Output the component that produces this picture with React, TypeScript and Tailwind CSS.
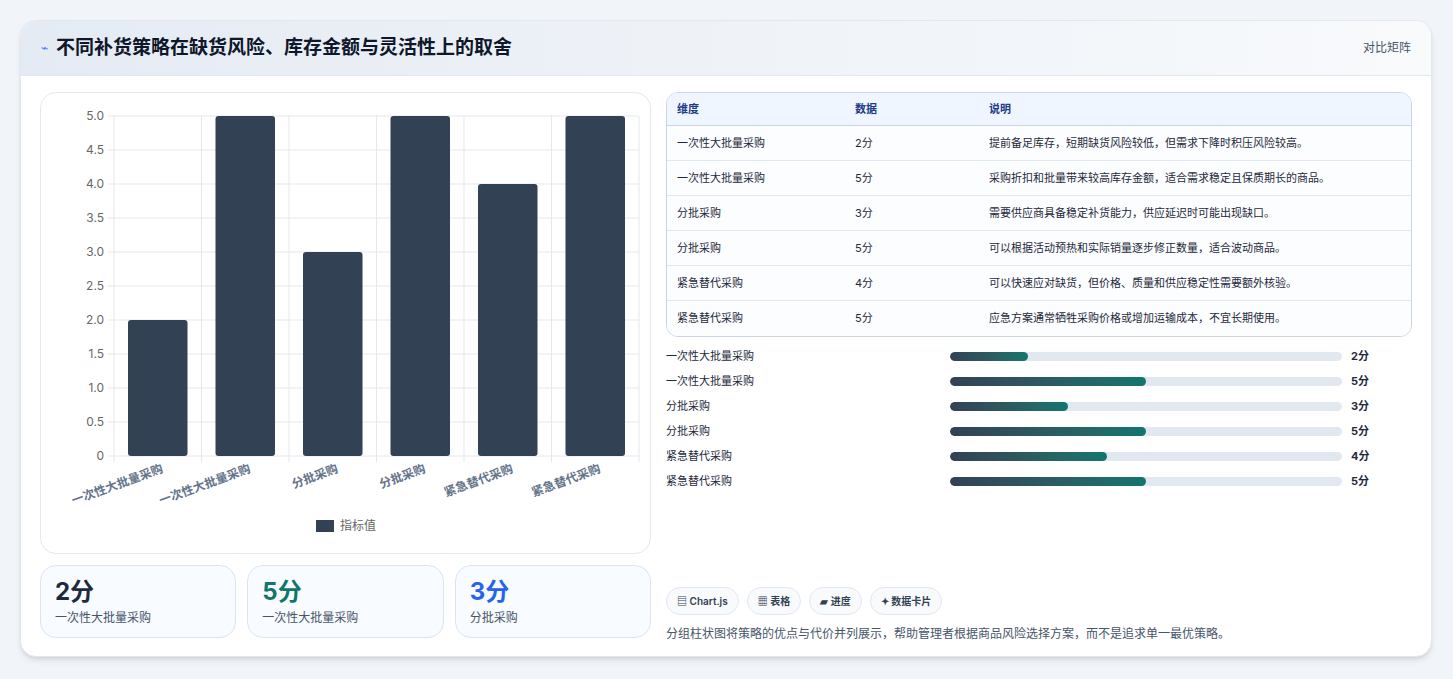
import React from "react";

const cats = ["一次性大批量采购", "一次性大批量采购", "分批采购", "分批采购", "紧急替代采购", "紧急替代采购"];
const vals = [2, 5, 3, 5, 4, 5];
const rows = [
  ["一次性大批量采购", "2分", "提前备足库存，短期缺货风险较低，但需求下降时积压风险较高。"],
  ["一次性大批量采购", "5分", "采购折扣和批量带来较高库存金额，适合需求稳定且保质期长的商品。"],
  ["分批采购", "3分", "需要供应商具备稳定补货能力，供应延迟时可能出现缺口。"],
  ["分批采购", "5分", "可以根据活动预热和实际销量逐步修正数量，适合波动商品。"],
  ["紧急替代采购", "4分", "可以快速应对缺货，但价格、质量和供应稳定性需要额外核验。"],
  ["紧急替代采购", "5分", "应急方案通常牺牲采购价格或增加运输成本，不宜长期使用。"],
];

function Chart() {
  const x0 = 73, x1 = 598, y0 = 23, y1 = 363;
  const cw = (x1 - x0) / 6;
  const yAt = (v: number) => y1 - (v / 5) * (y1 - y0);
  const ticks = [0, 0.5, 1, 1.5, 2, 2.5, 3, 3.5, 4, 4.5, 5];
  return (
    <svg width="610" height="460" className="block">
      {ticks.map((t) => (
        <g key={t}>
          <line x1={x0 - 6} x2={x1} y1={yAt(t)} y2={yAt(t)} stroke="#e5e7eb" />
          <text x={x0 - 10} y={yAt(t) + 4} textAnchor="end" fontSize="12" fill="#666">
            {t === 0 ? "0" : t.toFixed(1)}
          </text>
        </g>
      ))}
      {Array.from({ length: 7 }).map((_, i) => (
        <line key={i} x1={x0 + i * cw} x2={x0 + i * cw} y1={y0} y2={y1 + 6} stroke="#e5e7eb" />
      ))}
      {vals.map((v, i) => (
        <rect key={i} x={x0 + i * cw + 14} y={yAt(v)} width={cw - 28} height={y1 - yAt(v)} rx="3" fill="#334155" />
      ))}
      {cats.map((c, i) => {
        const cx = x0 + i * cw + cw / 2 + 6;
        return (
          <text key={i} x={cx} y={y1 + 16} textAnchor="end" fontSize="12" fontWeight="600" fill="#64748b" transform={`rotate(-20 ${cx} ${y1 + 16})`}>
            {c}
          </text>
        );
      })}
      <rect x="275" y="427" width="18" height="12" fill="#334155" />
      <text x="299" y="437" fontSize="12" fill="#666">指标值</text>
    </svg>
  );
}

export default function App() {
  return (
    <div className="w-[1453px] h-[679px] bg-[#f1f5f9] pt-5 px-5" style={{ fontFamily: "Inter, 'Noto Sans CJK SC', sans-serif" }}>
      <div className="w-[1412px] h-[637px] bg-white rounded-2xl border border-[#e2e8f0] shadow-md overflow-hidden">
        <div className="h-[55px] flex items-center justify-between px-5 bg-gradient-to-r from-[#e5ebf3] to-[#f8fafc] border-b border-[#e2e8f0]">
          <div className="flex items-center gap-2">
            <span className="text-[#3b82f6] text-xs">⌁</span>
            <h1 className="text-[19px] font-bold text-[#0f172a]">不同补货策略在缺货风险、库存金额与灵活性上的取舍</h1>
          </div>
          <span className="text-xs text-[#475569]">对比矩阵</span>
        </div>
        <div className="flex gap-[15px] px-[19px] pt-4">
          <div className="w-[611px] flex flex-col gap-[11px]">
            <div className="h-[462px] border border-[#e2e8f0] rounded-2xl overflow-hidden">
              <Chart />
            </div>
            <div className="grid grid-cols-3 gap-[11px]">
              {[["2分", "text-[#1e293b]", "一次性大批量采购"], ["5分", "text-[#0f766e]", "一次性大批量采购"], ["3分", "text-[#2563eb]", "分批采购"]].map(([v, c, l], i) => (
                <div key={i} className="h-[73px] rounded-2xl border border-[#dbe5f0] bg-[#f8fbff] px-[14px] pt-2">
                  <div className={`text-[24px] font-bold leading-[36px] ${c}`}>{v}</div>
                  <div className="text-xs text-[#475569]">{l}</div>
                </div>
              ))}
            </div>
          </div>
          <div className="flex-1 flex flex-col">
            <div className="rounded-xl border border-[#cbd5e1] overflow-hidden">
              <div className="grid grid-cols-[178px_134px_1fr] h-[33px] items-center bg-[#eff6ff] border-b border-[#cbd5e1] text-[11px] font-semibold text-[#1e3a8a] px-[10px]">
                <div>维度</div><div>数据</div><div>说明</div>
              </div>
              {rows.map((r, i) => (
                <div key={i} className="grid grid-cols-[178px_134px_1fr] h-[35px] items-center border-b border-[#e2e8f0] last:border-b-0 text-[11px] text-[#1e293b] px-[10px] bg-[#fcfdfe]">
                  <div>{r[0]}</div><div>{r[1]}</div><div>{r[2]}</div>
                </div>
              ))}
            </div>
            <div className="flex flex-col mt-[7px]">
              {rows.map((r, i) => (
                <div key={i} className="h-[25px] flex items-center text-[11px] text-[#1e293b]">
                  <div className="w-[284px]">{r[0]}</div>
                  <div className="w-[392px] h-[9px] rounded-full bg-[#e2e8f0] overflow-hidden">
                    <div className="h-full rounded-full bg-gradient-to-r from-[#334155] to-[#0f766e]" style={{ width: `${(parseInt(r[1]) / 10) * 100}%` }} />
                  </div>
                  <div className="ml-[9px] font-bold">{r[1]}</div>
                </div>
              ))}
            </div>
            <div className="flex gap-2 mt-[93px]">
              {["▤ Chart.js", "▦ 表格", "▰ 进度", "✦ 数据卡片"].map((t) => (
                <span key={t} className="h-[28px] px-[10px] flex items-center rounded-full border border-[#e2e8f0] bg-[#f8fafc] text-[10px] font-semibold text-[#334155]">{t}</span>
              ))}
            </div>
            <p className="mt-[11px] text-xs text-[#475569]">分组柱状图将策略的优点与代价并列展示，帮助管理者根据商品风险选择方案，而不是追求单一最优策略。</p>
          </div>
        </div>
      </div>
    </div>
  );
}
